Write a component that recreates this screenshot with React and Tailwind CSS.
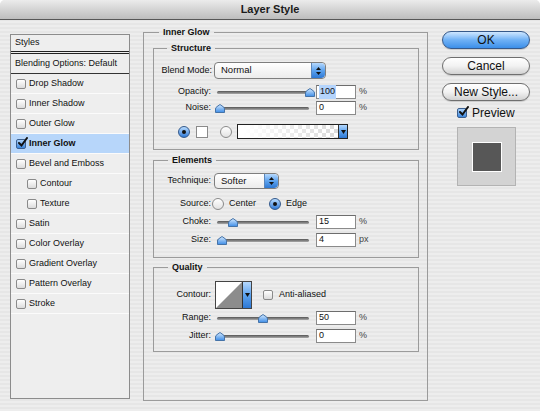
import React from 'react';

const font = "font-['Liberation_Sans',Arial,sans-serif]";

function Check({ checked, size = 'w-[9px] h-[9px]' }) {
  if (checked) {
    return (
      <div className={`${size} relative shrink-0 rounded-[2px] border border-[#3b5f8f] bg-gradient-to-b from-[#a9d0f8] to-[#3a86dc]`}>
        <svg className="absolute -top-[3px] left-0" width="11" height="11" viewBox="0 0 11 11">
          <path d="M2 6 L4.5 8.5 L10 1" fill="none" stroke="#111" strokeWidth="2" strokeLinecap="round" />
        </svg>
      </div>
    );
  }
  return <div className={`${size} shrink-0 rounded-[2px] border border-[#8a8a8a] bg-gradient-to-b from-white to-[#dcdcdc]`} />;
}

function Radio({ checked }) {
  if (checked) {
    return (
      <div className="w-[12px] h-[12px] shrink-0 rounded-full border border-[#33598c] bg-gradient-to-b from-[#b8dcff] to-[#2f7ad6] flex items-center justify-center">
        <div className="w-[4px] h-[4px] rounded-full bg-[#111]" />
      </div>
    );
  }
  return <div className="w-[12px] h-[12px] shrink-0 rounded-full border border-[#8a8a8a] bg-gradient-to-b from-white to-[#e2e2e2]" />;
}

function Slider({ at }) {
  return (
    <div className="relative w-[99px] h-[14px] shrink-0 flex items-center">
      <div className="w-[92px] h-[3px] rounded-full bg-gradient-to-b from-[#555] to-[#aaa]" />
      <svg className="absolute top-[3px]" style={{ left: at - 4.5 }} width="10" height="9" viewBox="0 0 10 9">
        <defs>
          <linearGradient id="thumb" x1="0" y1="0" x2="0" y2="1">
            <stop offset="0" stopColor="#d6ebff" />
            <stop offset="1" stopColor="#3d8ce6" />
          </linearGradient>
        </defs>
        <path d="M0.5 8.5 V5 Q0.5 3.6 2 2.6 L5 0.5 L8 2.6 Q9.5 3.6 9.5 5 V8.5 Z" fill="url(#thumb)" stroke="#4573a8" />
      </svg>
    </div>
  );
}

function NumInput({ value, selected }) {
  return (
    <div className="w-[40px] h-[14px] shrink-0 border border-[#8a8a8a] border-t-[#6d6d6d] bg-white pl-[2px] flex items-center text-[9px] text-[#111]">
      <span className={selected ? 'bg-[#b4d4fc] px-px' : ''}>{value}</span>
    </div>
  );
}

function Stepper() {
  return (
    <div className="w-[14px] h-full shrink-0 rounded-r-[4px] border-l border-[#5b86bb] bg-gradient-to-b from-[#b5d8fd] via-[#5da3ee] to-[#2d78d4] flex flex-col items-center justify-center gap-[2px]">
      <svg width="5" height="3" viewBox="0 0 5 3"><path d="M0 3 L2.5 0 L5 3 Z" fill="#111" /></svg>
      <svg width="5" height="3" viewBox="0 0 5 3"><path d="M0 0 L2.5 3 L5 0 Z" fill="#111" /></svg>
    </div>
  );
}

function Dropdown({ label, className }) {
  return (
    <div className={`${className} shrink-0 flex rounded-[4px] border border-[#7e7e7e] bg-gradient-to-b from-white to-[#ececec] overflow-hidden`}>
      <div className="flex-1 pl-[6px] flex items-center text-[9.5px] text-[#111]">{label}</div>
      <Stepper />
    </div>
  );
}

function DownTip({ className }) {
  return (
    <div className={`${className} w-[9px] shrink-0 border-l border-[#333] bg-gradient-to-b from-[#b5d8fd] via-[#5da3ee] to-[#2d78d4] flex items-center justify-center`}>
      <svg width="5" height="4" viewBox="0 0 5 4"><path d="M0 0 L5 0 L2.5 4 Z" fill="#111" /></svg>
    </div>
  );
}

function Label({ children }) {
  return <div className="w-[57px] shrink-0 text-right text-[9px] text-[#111]">{children}</div>;
}

function SliderRow({ label, at, value, unit, selected }) {
  return (
    <div className="h-[18px] flex items-center">
      <Label>{label}</Label>
      <div className="ml-[6px]">
        <Slider at={at} />
      </div>
      <NumInput value={value} selected={selected} />
      <span className="ml-[3px] text-[9px] text-[#444]">{unit}</span>
    </div>
  );
}

function Group({ title, className, legendMl, children }) {
  return (
    <fieldset className={`${className} border border-[#9b9b9b]`}>
      <legend className={`${legendMl} px-[4px] leading-[12px] text-[9px] font-bold text-[#111]`}>{title}</legend>
      {children}
    </fieldset>
  );
}

const styleItems = [
  { name: 'Drop Shadow' },
  { name: 'Inner Shadow' },
  { name: 'Outer Glow' },
  { name: 'Inner Glow', checked: true, active: true },
  { name: 'Bevel and Emboss' },
  { name: 'Contour', sub: true },
  { name: 'Texture', sub: true },
  { name: 'Satin' },
  { name: 'Color Overlay' },
  { name: 'Gradient Overlay' },
  { name: 'Pattern Overlay' },
  { name: 'Stroke' },
];

function StylesList() {
  return (
    <div className="ml-[10px] mt-[14px] w-[120px] h-[365px] shrink-0 border border-[#8c8c8c] bg-[#eeeeee] text-[9px] text-[#111] flex flex-col">
      <div className="h-[19px] pl-[4px] flex items-center border-b-[3px] border-double border-[#222]">Styles</div>
      <div className="h-[20px] pl-[4px] flex items-center border-b border-[#333]">Blending Options: Default</div>
      {styleItems.map((it) => (
        <div
          key={it.name}
          className={`h-[20px] flex items-center border-b border-[#fbfbfb] ${it.sub ? 'pl-[16px]' : 'pl-[5px]'} ${it.active ? 'bg-[#b7d6fa] font-bold' : ''}`}
        >
          <Check checked={it.checked} size="w-[10px] h-[10px]" />
          <span className="ml-[3px]">{it.name}</span>
        </div>
      ))}
    </div>
  );
}

function AquaButton({ children, primary }) {
  return (
    <div
      className={`w-[88px] h-[18px] rounded-full border flex items-center justify-center text-[12px] text-[#111] shadow-[0_1px_1px_rgba(0,0,0,0.15)] ${
        primary
          ? 'border-[#36598a] bg-gradient-to-b from-[#cfe7ff] via-[#6fb1f5] to-[#3b8fe9]'
          : 'border-[#6f6f6f] bg-gradient-to-b from-white via-[#f2f2f2] to-[#d2d2d2]'
      }`}
    >
      {children}
    </div>
  );
}

export default function App() {
  return (
    <div className="w-[540px] h-[411px] bg-white">
      <div className={`${font} w-[540px] h-[411px] rounded-t-[5px] overflow-hidden flex flex-col bg-[repeating-linear-gradient(0deg,#ededed_0px,#ededed_2px,#e6e6e6_2px,#e6e6e6_4px)]`}>
        <div className="h-[20px] shrink-0 border-b border-[#575757] bg-gradient-to-b from-[#ececec] to-[#bdbdbd] flex items-center justify-center text-[11px] font-bold text-[#1a1a1a]">
          Layer Style
        </div>

        <div className="flex items-start">
          <StylesList />

          <Group title="Inner Glow" className="ml-[13px] mt-[6px] w-[285px] h-[375px] shrink-0" legendMl="ml-[15px]">
            <Group title="Structure" className="ml-[9px] mt-[4px] w-[266px] pb-[10px]" legendMl="ml-[13px]">
              <div className="mt-[8px] h-[17px] flex items-center">
                <div className="w-[58px] shrink-0 text-right text-[9px] text-[#111]">Blend Mode:</div>
                <Dropdown label="Normal" className="ml-[2px] w-[112px] h-[17px]" />
              </div>
              <div className="mt-[5px]">
                <div className="h-[16px] flex items-center">
                  <Label>Opacity:</Label>
                  <div className="ml-[6px]"><Slider at={92} /></div>
                  <NumInput value="100" selected />
                  <span className="ml-[3px] text-[9px] text-[#444]">%</span>
                </div>
                <div className="h-[16px] flex items-center">
                  <Label>Noise:</Label>
                  <div className="ml-[6px]"><Slider at={2} /></div>
                  <NumInput value="0" />
                  <span className="ml-[3px] text-[9px] text-[#444]">%</span>
                </div>
              </div>
              <div className="mt-[8px] h-[15px] flex items-center">
                <div className="ml-[24px]"><Radio checked /></div>
                <div className="ml-[6px] w-[12px] h-[12px] border border-[#8a8a8a] bg-white" />
                <div className="ml-[12px]"><Radio /></div>
                <div className="ml-[5px] w-[111px] h-[15px] flex border border-[#222] overflow-hidden">
                  <div className="flex-1 bg-[image:linear-gradient(to_right,#fff_5%,rgba(255,255,255,0)_95%),repeating-conic-gradient(#dcdcdc_0_25%,#fff_0_50%)] bg-[length:100%_100%,8px_8px]" />
                  <DownTip className="h-full" />
                </div>
              </div>
            </Group>

            <Group title="Elements" className="ml-[9px] mt-[4px] w-[266px] pb-[8px]" legendMl="ml-[14px]">
              <div className="mt-[7px] h-[16px] flex items-center">
                <Label>Technique:</Label>
                <Dropdown label="Softer" className="ml-[3px] w-[65px] h-[16px]" />
              </div>
              <div className="mt-[7px] h-[16px] flex items-center text-[9px] text-[#111]">
                <Label>Source:</Label>
                <div className="ml-[1px]"><Radio /></div>
                <span className="ml-[5px]">Center</span>
                <div className="ml-[13px]"><Radio checked /></div>
                <span className="ml-[5px]">Edge</span>
              </div>
              <div className="mt-[1px]">
                <SliderRow label="Choke:" at={15} value="15" unit="%" />
                <SliderRow label="Size:" at={4} value="4" unit="px" />
              </div>
            </Group>

            <Group title="Quality" className="ml-[9px] mt-[3px] w-[266px] pb-[6px]" legendMl="ml-[14px]">
              <div className="mt-[8px] h-[28px] flex items-center">
                <Label>Contour:</Label>
                <div className="ml-[4px] w-[37px] h-[28px] flex border border-[#444] overflow-hidden">
                  <svg className="flex-1" width="27" height="26" viewBox="0 0 27 26" preserveAspectRatio="none">
                    <rect width="27" height="26" fill="#fff" />
                    <path d="M0 26 L27 0 L27 26 Z" fill="#8c8c8c" />
                  </svg>
                  <DownTip className="h-full" />
                </div>
                <div className="ml-[11px]"><Check size="w-[10px] h-[10px]" /></div>
                <span className="ml-[6px] text-[9px] text-[#111]">Anti-aliased</span>
              </div>
              <SliderRow label="Range:" at={45} value="50" unit="%" />
              <SliderRow label="Jitter:" at={2} value="0" unit="%" />
            </Group>
          </Group>

          <div className="ml-[14px] mt-[11px] w-[88px] shrink-0 flex flex-col">
            <AquaButton primary>OK</AquaButton>
            <div className="mt-[8px]"><AquaButton>Cancel</AquaButton></div>
            <div className="mt-[8px]"><AquaButton>New Style...</AquaButton></div>
            <div className="mt-[5px] h-[14px] ml-[15px] flex items-center">
              <Check checked size="w-[10px] h-[10px]" />
              <span className="ml-[5px] text-[12px] text-[#111]">Preview</span>
            </div>
            <div className="mt-[7px] ml-[15px] w-[59px] h-[59px] border border-[#b3b3b3] bg-[#d3d3d3] flex items-center justify-center">
              <div className="w-[30px] h-[30px] border border-white bg-[#575757]" />
            </div>
          </div>
        </div>
      </div>
    </div>
  );
}
